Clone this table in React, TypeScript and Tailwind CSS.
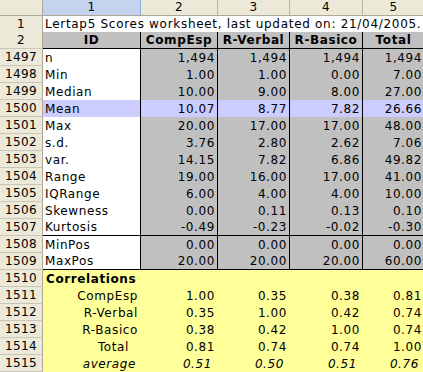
import React from 'react';

type Stat = { label: string; values: string[]; mean?: boolean; rule?: boolean };

const stats: Stat[] = [
  { label: 'n', values: ['1,494', '1,494', '1,494', '1,494'] },
  { label: 'Min', values: ['1.00', '1.00', '0.00', '7.00'] },
  { label: 'Median', values: ['10.00', '9.00', '8.00', '27.00'] },
  { label: 'Mean', values: ['10.07', '8.77', '7.82', '26.66'], mean: true },
  { label: 'Max', values: ['20.00', '17.00', '17.00', '48.00'] },
  { label: 's.d.', values: ['3.76', '2.80', '2.62', '7.06'] },
  { label: 'var.', values: ['14.15', '7.82', '6.86', '49.82'] },
  { label: 'Range', values: ['19.00', '16.00', '17.00', '41.00'] },
  { label: 'IQRange', values: ['6.00', '4.00', '4.00', '10.00'] },
  { label: 'Skewness', values: ['0.00', '0.11', '0.13', '0.10'] },
  { label: 'Kurtosis', values: ['-0.49', '-0.23', '-0.02', '-0.30'], rule: true },
  { label: 'MinPos', values: ['0.00', '0.00', '0.00', '0.00'] },
  { label: 'MaxPos', values: ['20.00', '20.00', '20.00', '60.00'], rule: true },
];

type Corr = { label: string; values: string[]; pad: string; italic?: boolean };

const corr: Corr[] = [
  { label: 'CompEsp', values: ['1.00', '0.35', '0.38', '0.81'], pad: 'pr-[3px]' },
  { label: 'R-Verbal', values: ['0.35', '1.00', '0.42', '0.74'], pad: 'pr-[3px]' },
  { label: 'R-Basico', values: ['0.38', '0.42', '1.00', '0.74'], pad: 'pr-[3px]' },
  { label: 'Total', values: ['0.81', '0.74', '0.74', '1.00'], pad: 'pr-[12px]' },
  { label: 'average', values: ['0.51', '0.50', '0.51', '0.76'], pad: 'pr-[5px]', italic: true },
];

const headers = ['CompEsp', 'R-Verbal', 'R-Basico', 'Total'];

const grid = 'grid grid-cols-[43px_98px_77px_72px_73px_62px]';

const RowHead: React.FC<{ n: number | string }> = ({ n }) => (
  <div className="flex items-center justify-center bg-[#ECE9D8] border-r border-b border-r-[#ACA899] border-b-[#CBC7B8] pt-[1px] tracking-[0.4px]">
    {n}
  </div>
);

export default function App() {
  return (
    <div className="w-[423px] h-[372px] overflow-hidden bg-white text-black text-[12px] leading-[15px] tracking-[0.6px] font-['DejaVu_Sans',sans-serif]">
      {/* column letters */}
      <div className={`${grid} h-[16px]`}>
        <div className="bg-[#ECE9D8] border-r border-b border-r-[#ACA899] border-b-[#ACA899]" />
        <div className="flex items-center justify-center bg-[#C4D4EE] border-r border-b border-r-[#8EA9D8] border-b-[#ACA899]">1</div>
        {[2, 3, 4, 5].map((c) => (
          <div key={c} className="flex items-center justify-center bg-[#ECE9D8] border-r border-b border-r-[#B8B5A6] border-b-[#ACA899]">
            {c}
          </div>
        ))}
      </div>

      {/* title row */}
      <div className={`${grid} h-[16px]`}>
        <RowHead n={1} />
        <div className="col-span-5 flex items-center pl-[2px] whitespace-nowrap overflow-hidden border-b border-b-[#808080] tracking-[0.7px]">
          Lertap5 Scores worksheet, last updated on: 21/04/2005.
        </div>
      </div>

      {/* header row */}
      <div className={`${grid} h-[17px]`}>
        <RowHead n={2} />
        <div className="flex items-center justify-center font-bold bg-[#C0C0C0] border-r border-b border-black pt-[1px]">ID</div>
        {headers.map((h) => (
          <div key={h} className="flex items-center justify-center font-bold bg-[#C0C0C0] border-r border-b border-black pt-[1px]">
            {h}
          </div>
        ))}
      </div>

      {/* statistics */}
      {stats.map((s, i) => (
        <div key={s.label} className={`${grid} h-[17px]`}>
          <RowHead n={1497 + i} />
          <div
            className={`flex items-center pl-[2px] pt-[1px] border-r border-black ${s.mean ? 'bg-[#CCCCFF]' : 'bg-white'} ${s.rule ? 'border-b' : ''}`}
          >
            {s.label}
          </div>
          {s.values.map((v, j) => (
            <div
              key={j}
              className={`flex items-center justify-end pr-[2px] pt-[1px] border-r border-black ${s.mean ? 'bg-[#CCCCFF]' : 'bg-[#C0C0C0]'} ${s.rule ? 'border-b' : ''}`}
            >
              {v}
            </div>
          ))}
        </div>
      ))}

      {/* correlations */}
      <div className={`${grid} h-[17px]`}>
        <RowHead n={1510} />
        <div className="col-span-5 flex items-center pl-[3px] pt-[1px] font-bold bg-[#FFFF99]">Correlations</div>
      </div>
      {corr.map((c, i) => (
        <div key={c.label} className={`${grid} h-[17px]`}>
          <RowHead n={1511 + i} />
          <div className={`flex items-center justify-end pt-[1px] bg-[#FFFF99] ${c.pad} ${c.italic ? 'italic' : ''}`}>{c.label}</div>
          {c.values.map((v, j) => (
            <div
              key={j}
              className={`flex items-center justify-end pt-[1px] bg-[#FFFF99] ${c.italic ? 'italic pr-[6px]' : 'pr-[3px]'}`}
            >
              {v}
            </div>
          ))}
        </div>
      ))}
    </div>
  );
}
